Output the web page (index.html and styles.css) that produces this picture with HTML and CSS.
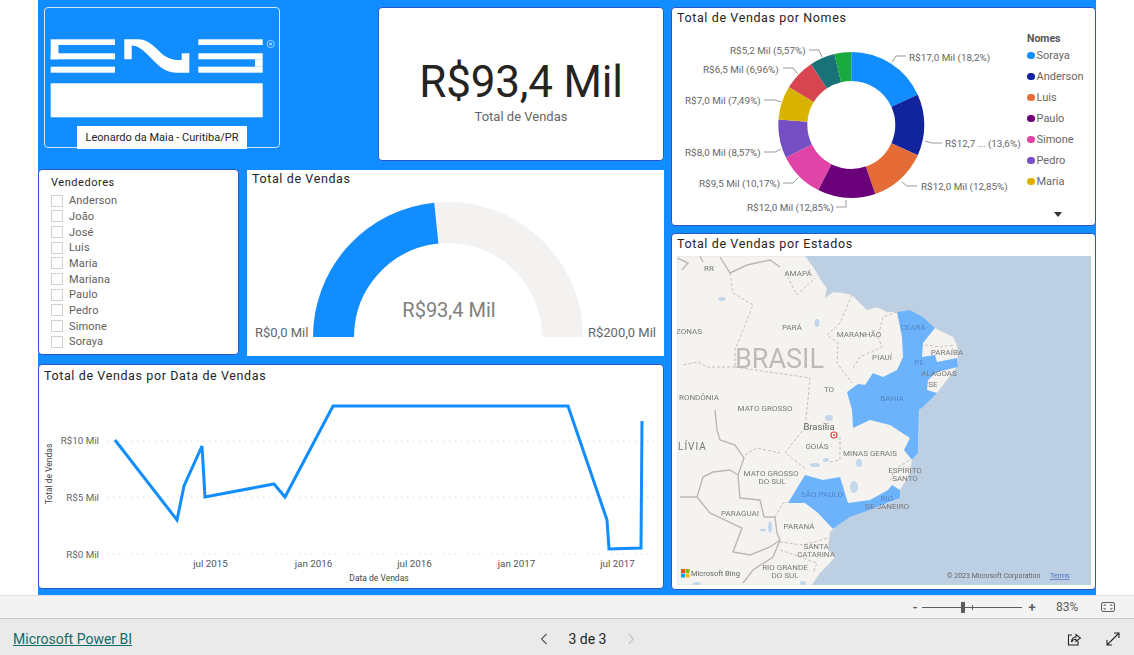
FILE: index.html
```html
<!DOCTYPE html>
<html lang="pt-BR">
<head>
<meta charset="utf-8">
<title>Total de Vendas</title>
<link rel="stylesheet" href="styles.css">
</head>
<body>
<div class="page">
  <main class="canvas">
    <div class="col-left">
      <div class="row-top">
        <section class="logo-card">
          <svg class="logo" viewBox="44 7 236 141" aria-label="SNS">
            <g fill="#fff">
              <rect x="50.7" y="39.3" width="64.3" height="5.7"/>
              <rect x="50.7" y="45" width="7.7" height="14.3"/>
              <rect x="50.7" y="53.3" width="64.3" height="6"/>
              <rect x="50.7" y="66.7" width="64.3" height="6"/>
              <path d="M124.300 39.300H138C148 39.300 155 47 162 54 170 60 175 60 181.700 60V53.300H189.300V72.700H176C164 72.700 158 65 150 57 143 50 138 45.500 131.700 45.500V59.300H124.300Z"/>
              <rect x="198.300" y="39.3" width="64.400" height="5.7"/>
              <rect x="198.300" y="53.3" width="64.400" height="6"/>
              <rect x="255" y="59.300" width="7.700" height="7.400"/>
              <rect x="198.300" y="66.7" width="64.400" height="6"/>
              <rect x="50.7" y="83.300" width="212" height="34"/>
            </g>
            <circle cx="270.700" cy="44" r="3.600" fill="none" stroke="#9fd0ff" stroke-width="1"/>
            <circle cx="270.700" cy="44" r="1.500" fill="#9fd0ff"/>
          </svg>
          <div class="logo-caption">Leonardo da Maia - Curitiba/PR</div>
        </section>
        <section class="card kpi-card">
          <div class="kpi-value">R$93,4 Mil</div>
          <div class="kpi-label">Total de Vendas</div>
        </section>
      </div>
      <div class="row-mid">
        <section class="card slicer-card">
          <h2 class="slicer-title">Vendedores</h2>
          <ul class="slicer-list">
            <li class="slicer-item"><span class="check"></span>Anderson</li>
            <li class="slicer-item"><span class="check"></span>João</li>
            <li class="slicer-item"><span class="check"></span>José</li>
            <li class="slicer-item"><span class="check"></span>Luis</li>
            <li class="slicer-item"><span class="check"></span>Maria</li>
            <li class="slicer-item"><span class="check"></span>Mariana</li>
            <li class="slicer-item"><span class="check"></span>Paulo</li>
            <li class="slicer-item"><span class="check"></span>Pedro</li>
            <li class="slicer-item"><span class="check"></span>Simone</li>
            <li class="slicer-item"><span class="check"></span>Soraya</li>
          </ul>
        </section>
        <section class="gauge-card">
          <h2 class="title gauge-title">Total de Vendas</h2>
          <svg class="gauge" viewBox="247 188 417 168">
            <path d="M333.500 337A114.500 114.500 0 0 1 562.500 337" class="gauge-bg" pathLength="100"/>
            <path d="M333.500 337A114.500 114.500 0 0 1 562.500 337" class="gauge-fg" pathLength="100" stroke-dasharray="46.7 100"/>
            <text x="449" y="317" text-anchor="middle" class="gauge-value">R$93,4 Mil</text>
            <text x="255" y="337" class="gauge-end">R$0,0 Mil</text>
            <text x="588" y="337" class="gauge-end">R$200,0 Mil</text>
          </svg>
        </section>
      </div>
      <section class="card line-card">
        <h2 class="title line-title">Total de Vendas por Data de Vendas</h2>
        <svg class="line-chart" viewBox="39 386 624 203">
          <g class="grid">
            <line x1="107" x2="658" y1="441" y2="441"/>
            <line x1="107" x2="658" y1="497" y2="497"/>
            <line x1="107" x2="658" y1="554" y2="554"/>
          </g>
          <g class="y-labels" text-anchor="end">
            <text x="99" y="444">R$10 Mil</text>
            <text x="99" y="501">R$5 Mil</text>
            <text x="99" y="558">R$0 Mil</text>
          </g>
          <g class="x-labels" text-anchor="middle">
            <text x="210.500" y="567">jul 2015</text>
            <text x="313.500" y="567">jan 2016</text>
            <text x="414.500" y="567">jul 2016</text>
            <text x="516.500" y="567">jan 2017</text>
            <text x="617.500" y="567">jul 2017</text>
          </g>
          <text class="axis-title" x="379" y="581" text-anchor="middle">Data de Vendas</text>
          <text class="axis-title" transform="translate(52 474) rotate(-90)" text-anchor="middle">Total de Vendas</text>
          <polyline class="series" points="115,440 177,520 184,486 202,446 205,497 274,484 285,497 333,406 568,406 607,520 609,549 641,548 642,421"/>
        </svg>
      </section>
    </div>
    <div class="col-right">
      <section class="card donut-card">
        <h2 class="title donut-title">Total de Vendas por Nomes</h2>
        <div class="donut-body">
          <svg class="donut" viewBox="671 28 350 198">
            <g transform="rotate(-90 851.300 125)" fill="none" stroke-width="29">
              <circle cx="851.300" cy="125" r="58.500" pathLength="100" stroke="#118DFF" stroke-dasharray="18.2 81.8" stroke-dashoffset="0"/>
              <circle cx="851.300" cy="125" r="58.500" pathLength="100" stroke="#12239E" stroke-dasharray="13.6 86.4" stroke-dashoffset="-18.2"/>
              <circle cx="851.300" cy="125" r="58.500" pathLength="100" stroke="#E66C37" stroke-dasharray="12.85 87.15" stroke-dashoffset="-31.8"/>
              <circle cx="851.300" cy="125" r="58.500" pathLength="100" stroke="#6B007B" stroke-dasharray="12.85 87.15" stroke-dashoffset="-44.65"/>
              <circle cx="851.300" cy="125" r="58.500" pathLength="100" stroke="#E044A7" stroke-dasharray="10.17 89.83" stroke-dashoffset="-57.5"/>
              <circle cx="851.300" cy="125" r="58.500" pathLength="100" stroke="#744EC2" stroke-dasharray="8.57 91.43" stroke-dashoffset="-67.67"/>
              <circle cx="851.300" cy="125" r="58.500" pathLength="100" stroke="#D9B300" stroke-dasharray="7.49 92.51" stroke-dashoffset="-76.24"/>
              <circle cx="851.300" cy="125" r="58.500" pathLength="100" stroke="#D64550" stroke-dasharray="6.96 93.04" stroke-dashoffset="-83.73"/>
              <circle cx="851.300" cy="125" r="58.500" pathLength="100" stroke="#197278" stroke-dasharray="5.57 94.43" stroke-dashoffset="-90.69"/>
            </g>
            <path d="M837.680 68.100A58.500 58.500 0 0 1 851.300 66.500" fill="none" stroke="#1AAB40" stroke-width="29"/>
            <g class="leaders">
              <polyline points="892,62 896,56 906,56"/>
              <polyline points="925,141 932,143 942,143"/>
              <polyline points="902,182 907,186 917,186"/>
              <polyline points="846,200 846,207 836,207"/>
              <polyline points="798,178 793,183 783,183"/>
              <polyline points="781,149 775,152 764,152"/>
              <polyline points="781,102 775,100 764,100"/>
              <polyline points="798,74 793,68 783,68"/>
              <polyline points="822,57 819,50 809,50"/>
            </g>
            <g class="donut-labels">
              <text x="909" y="61">R$17,0 Mil (18,2%)</text>
              <text x="945" y="147">R$12,7 ... (13,6%)</text>
              <text x="921" y="190">R$12,0 Mil (12,85%)</text>
              <text x="747" y="211">R$12,0 Mil (12,85%)</text>
              <text x="699" y="187">R$9,5 Mil (10,17%)</text>
              <text x="685" y="156">R$8,0 Mil (8,57%)</text>
              <text x="685" y="104">R$7,0 Mil (7,49%)</text>
              <text x="703" y="73">R$6,5 Mil (6,96%)</text>
              <text x="730" y="54">R$5,2 Mil (5,57%)</text>
            </g>
          </svg>
          <div class="legend">
            <div class="legend-title">Nomes</div>
            <div class="legend-item"><span class="dot dot-soraya"></span>Soraya</div>
            <div class="legend-item"><span class="dot dot-anderson"></span>Anderson</div>
            <div class="legend-item"><span class="dot dot-luis"></span>Luis</div>
            <div class="legend-item"><span class="dot dot-paulo"></span>Paulo</div>
            <div class="legend-item"><span class="dot dot-simone"></span>Simone</div>
            <div class="legend-item"><span class="dot dot-pedro"></span>Pedro</div>
            <div class="legend-item"><span class="dot dot-maria"></span>Maria</div>
            <div class="legend-more"></div>
          </div>
        </div>
      </section>
      <section class="card map-card">
        <h2 class="title map-title">Total de Vendas por Estados</h2>
        <svg class="map" viewBox="677 256 414 329">
          <rect x="677" y="256" width="414" height="329" fill="#bdcfe3"/>
          <path class="land" d="M677 256H805L811 264 817 273 822 282 827 288 825 298 833 292 843 293 852 295 860 303 867 310 877 307 887 312 897 312 910 310 923 317 935 328 945 333 953 337 957 345 958 353 957 367 947 380 937 393 928 402 923 407 919 410 919 430 918 453 912 460 910 472 905 482 900 490 900 498 885 505 870 510 850 517 840 524 830 532 828 550 835 557 828 565 820 573 812 585H677Z"/>
          <g class="water">
            <ellipse cx="722" cy="299" rx="3.500" ry="2"/>
            <ellipse cx="817" cy="323" rx="2.500" ry="4"/>
            <ellipse cx="829" cy="418" rx="4" ry="3"/>
            <ellipse cx="859" cy="463" rx="3" ry="4"/>
            <ellipse cx="815" cy="465" rx="5" ry="2"/>
            <ellipse cx="826" cy="460" rx="3" ry="2"/>
            <ellipse cx="854" cy="487" rx="4" ry="6"/>
            <ellipse cx="770" cy="527" rx="2" ry="6"/>
            <ellipse cx="763" cy="530" rx="3" ry="1.500"/>
            <ellipse cx="803" cy="583" rx="3" ry="2"/>
            <ellipse cx="697" cy="584" rx="4" ry="2"/>
          </g>
          <path class="state" d="M897 312 910 310 923 317 935 328 923 343 922 357 935 355 937 362 957 358 958 367 937 372 928 380 927 390 937 393 923 407 919 410 918 453 912 460 904 450 910 438 890 425 870 420 853 428 852 410 847 392 858 384 865 385 873 373 883 377 897 370 903 357 902 337Z"/>
          <path class="state" d="M788 503 805 475 823 480 840 477 848 503 870 500 888 490 892 485 900 490 900 498 870 510 850 517 833 529 818 513 805 503Z"/>
          <g class="borders-state">
            <path d="M785 272 797 295 815 278"/>
            <path d="M730 273 733 293 753 305 735 350 735 367"/>
            <path d="M852 295 840 323 827 335 838 343 837 363 852 383"/>
            <path d="M897 312 883 317 878 337 882 347 860 357 852 370"/>
            <path d="M735 367 707 367 698 362 683 365"/>
            <path d="M735 367 810 378 807 410 805 427 785 453 807 470"/>
            <path d="M745 455 757 448 780 453"/>
            <path d="M840 437 840 460 830 462"/>
            <path d="M775 517 783 503 788 502"/>
            <path d="M780 542 803 545 828 538"/>
            <path d="M780 550 803 558 817 563 813 573"/>
            <path d="M898 467 910 460M893 473 890 482"/>
            <path d="M925 345 940 347 955 345"/>
          </g>
          <g class="borders-nation">
            <path d="M677 258 688 263 682 270M700 256 703 262"/>
            <path d="M720 257 730 273 747 265 770 260 780 267"/>
            <path d="M715 410 717 430 720 440 735 445 744 458 738 475 740 498 760 500 764 517"/>
            <path d="M697 497 703 477 713 472 730 470 738 475"/>
            <path d="M680 497 697 497 710 513 742 528 733 552 750 555 770 547 780 540 777 533 775 517 764 517"/>
            <path d="M780 540 773 557 753 570 743 583"/>
          </g>
          <text class="map-big" x="735" y="368">BRASIL</text>
          <g class="map-labels" text-anchor="middle">
            <text x="709" y="271">RR</text>
            <text x="798" y="276">AMAPÁ</text>
            <text x="689" y="334">ZONAS</text>
            <text x="792" y="330">PARÁ</text>
            <text x="859" y="337">MARANHÃO</text>
            <text x="882" y="360">PIAUÍ</text>
            <text x="913" y="330" class="on-state">CEARÁ</text>
            <text x="947" y="355">PARAÍBA</text>
            <text x="919" y="365" class="on-state">PE</text>
            <text x="939" y="376">ALAGOAS</text>
            <text x="933" y="387">SE</text>
            <text x="892" y="401" class="on-state">BAHIA</text>
            <text x="829" y="392">TO</text>
            <text x="699" y="400">RONDÔNIA</text>
            <text x="765" y="411">MATO GROSSO</text>
            <text class="map-city" x="819" y="430">Brasília</text>
            <text x="817" y="449">GOIÁS</text>
            <text x="870" y="456">MINAS GERAIS</text>
            <text x="905" y="473">ESPÍRITO</text>
            <text x="905" y="481">SANTO</text>
            <text x="771" y="476">MATO GROSSO</text>
            <text x="772" y="484">DO SUL</text>
            <text x="740" y="516">PARAGUAI</text>
            <text x="799" y="529">PARANÁ</text>
            <text x="822" y="497" class="on-state">SÃO PAULO</text>
            <text x="887" y="501" class="on-state">RIO</text>
            <text x="887" y="509">DE JANEIRO</text>
            <text x="816" y="549">SANTA</text>
            <text x="816" y="557">CATARINA</text>
            <text x="785" y="570">RIO GRANDE</text>
            <text x="785" y="578">DO SUL</text>
          </g>
          <text class="map-country" x="678" y="450">LÍVIA</text>
          <circle cx="834" cy="435" r="3" fill="#fff" stroke="#d9413a" stroke-width="1.200"/>
          <circle cx="834" cy="435" r="1.100" fill="#d9413a"/>
          <g>
            <rect x="681" y="569" width="4" height="4" fill="#f25022"/>
            <rect x="685.500" y="569" width="4" height="4" fill="#7fba00"/>
            <rect x="681" y="573.500" width="4" height="4" fill="#00a4ef"/>
            <rect x="685.500" y="573.500" width="4" height="4" fill="#ffb900"/>
          </g>
          <text class="map-bing" x="691" y="576">Microsoft Bing</text>
          <text class="map-copy" x="947" y="578">© 2023 Microsoft Corporation</text>
          <text class="map-terms" x="1050" y="578">Terms</text>
        </svg>
      </section>
    </div>
  </main>
  <div class="zoom-bar">
    <span class="zoom-sign">-</span>
    <span class="zoom-track"><span class="zoom-tick"></span><span class="zoom-thumb"></span></span>
    <span class="zoom-sign">+</span>
    <span class="zoom-pct">83%</span>
    <svg class="fit-icon" viewBox="0 0 14 10"><rect x="0.500" y="0.500" width="13" height="9" rx="1.500"/><path d="M3 4V3H5M9 3H11V4M3 6V7H5M9 7H11V6"/></svg>
  </div>
  <footer class="footer">
    <a class="brand" href="#">Microsoft Power BI</a>
    <nav class="pager">
      <svg class="chev" viewBox="0 0 8 12"><path d="M6.500 1 1.500 6 6.500 11"/></svg>
      <span class="pager-text">3 de 3</span>
      <svg class="chev chev-off" viewBox="0 0 8 12"><path d="M1.500 1 6.500 6 1.500 11"/></svg>
    </nav>
    <div class="actions">
      <svg class="act" viewBox="0 0 14 14"><path d="M5 3H1.500V13H11V9"/><path d="M4.500 10C4.500 6.500 7 5 9 5V2.500L13.500 6 9 9.500V7.200C7 7.200 5.500 8 4.500 10Z"/></svg>
      <svg class="act" viewBox="0 0 14 14"><path d="M1 13 13 1M8 1H13V6M1 8V13H6"/></svg>
    </div>
  </footer>
</div>
</body>
</html>
```
FILE: styles.css
```css
* { box-sizing: border-box; }
html, body { margin: 0; padding: 0; }
body { background: #fff; font-family: Roboto, "Noto Sans", sans-serif; color: #252423; overflow: hidden; }
.page { width: 1134px; height: 655px; display: flex; flex-direction: column; }

.canvas { width: 1058px; height: 595px; margin-left: 38px; padding: 7px 0 0 0; background: #118dff; display: flex; gap: 7px; flex: none; }
.col-left { width: 626px; display: flex; flex-direction: column; }
.col-right { width: 425px; display: flex; flex-direction: column; gap: 7px; }
.row-top { height: 154px; display: flex; justify-content: space-between; margin-left: 6px; }
.row-mid { margin-top: 8px; height: 187px; display: flex; justify-content: space-between; }

.card { background: #fff; border: 1px solid #2a55c9; border-radius: 4px; }
.title { margin: 0; font-size: 12.500px; font-weight: 400; letter-spacing: .62px; color: #252423; line-height: 16px; }

.logo-card { position: relative; width: 236px; height: 141px; border: 1px solid #cfe6ff; border-radius: 4px; }
.logo { position: absolute; left: -1px; top: -1px; width: 236px; height: 141px; display: block; }
.logo-caption { position: absolute; left: 32px; top: 118px; width: 170px; height: 23px; background: #fff; text-align: center; font-size: 11px; line-height: 24px; color: #252423; }

.kpi-card { width: 286px; display: flex; flex-direction: column; align-items: center; padding-top: 47px; }
.kpi-value { font-size: 44px; line-height: 54px; color: #252423; letter-spacing: -.2px; }
.kpi-label { font-size: 13px; line-height: 16px; color: #666; margin-top: 0; }

.slicer-card { width: 201px; height: 186px; padding: 6px 0 0 12px; }
.slicer-title { margin: 0 0 3px; font-size: 11px; font-weight: 400; line-height: 14px; letter-spacing: .55px; color: #252423; }
.slicer-list { list-style: none; margin: 0; padding: 0; }
.slicer-item { height: 15.670px; display: flex; align-items: center; gap: 6px; font-size: 11px; color: #605e5c; letter-spacing: .15px; }
.check { width: 12px; height: 12px; border: 1px solid #d2d0ce; background: #fff; flex: none; }

.gauge-card { width: 417px; height: 186px; margin-top: 1px; background: #fff; }
.gauge-title { padding: 1px 0 0 5px; height: 18px; }
.gauge { display: block; width: 417px; height: 168px; }
.gauge-bg, .gauge-fg { fill: none; stroke-width: 41; }
.gauge-bg { stroke: #f3f2f1; }
.gauge-fg { stroke: #118dff; }
.gauge-value { font-size: 20px; fill: #808080; }
.gauge-end { font-size: 13px; fill: #666; }

.line-card { margin-top: 8px; height: 225px; }
.line-title { padding: 3px 0 0 5px; height: 21px; }
.line-chart { display: block; width: 624px; height: 203px; }
.grid line { stroke: #d6d6d6; stroke-width: 1; stroke-dasharray: 1 5; }
.y-labels text { font-size: 9.800px; fill: #666; }
.x-labels text { font-size: 9.800px; fill: #555; }
.axis-title { font-size: 8.500px; fill: #444; }
.series { fill: none; stroke: #118dff; stroke-width: 3; stroke-linejoin: miter; }

.donut-card { height: 219px; }
.donut-title { padding: 2px 0 0 5px; height: 20px; }
.donut-body { display: flex; height: 197px; }
.donut { display: block; width: 350px; height: 198px; flex: none; margin-left: -1px; }
.leaders polyline { fill: none; stroke: #999; stroke-width: 1; }
.donut-labels text { font-size: 9.900px; fill: #666; }
.legend { position: relative; flex: 1; padding: 4px 0 0 6px; }
.legend-title { font-size: 10.500px; font-weight: 700; color: #555; line-height: 14px; margin-bottom: 3px; }
.legend-item { height: 21px; display: flex; align-items: flex-start; gap: 2px; font-size: 11px; line-height: 13px; color: #666; }
.dot { width: 7.500px; height: 7.500px; border-radius: 50%; margin-top: 2.500px; flex: none; }
.dot-soraya { background: #118dff; }
.dot-anderson { background: #12239e; }
.dot-luis { background: #e66c37; }
.dot-paulo { background: #6b007b; }
.dot-simone { background: #e044a7; }
.dot-pedro { background: #744ec2; }
.dot-maria { background: #d9b300; }
.legend-more { position: absolute; left: 33px; top: 184px; width: 0; height: 0; border: 4px solid transparent; border-top: 5px solid #333; border-bottom: 0; }

.map-card { height: 357px; }
.map-title { padding: 2px 0 0 5px; height: 22px; }
.map { display: block; width: 414px; height: 329px; margin-left: 5px; filter: blur(.3px); }
.land { fill: #f5f3f0; stroke: #d9d6d2; stroke-width: .5; }
.water { fill: #c4d6ea; }
.state { fill: #6db3fb; }
.borders-state path { fill: none; stroke: #bdb9b5; stroke-width: .9; stroke-dasharray: 3 2; }
.borders-nation path { fill: none; stroke: #bcb8b4; stroke-width: 1.400; }
.map-big { font-size: 27px; fill: #bdbbb9; }
.map-labels text { font-size: 8px; fill: #7a7a7a; }
.map-labels .on-state { fill: #4f86c6; }
.map-labels .map-city { font-size: 9.500px; fill: #666; }
.map-country { font-size: 10px; fill: #777; letter-spacing: 1px; }
.map-bing { font-size: 7.500px; fill: #666; }
.map-copy { font-size: 7px; fill: #666; }
.map-terms { font-size: 7px; fill: #4b6cc0; text-decoration: underline; }

.zoom-bar { height: 23px; flex: none; background: #f3f3f3; border-top: 1px solid #e1e1e1; display: flex; align-items: center; justify-content: flex-end; padding-right: 19px; font-size: 12px; color: #605e5c; }
.zoom-sign { width: 12px; text-align: center; font-size: 13px; font-weight: 700; color: #605e5c; }
.zoom-track { position: relative; width: 100px; height: 1px; margin: 0 4px 0 1px; background: #605e5c; }
.zoom-thumb { position: absolute; left: 39px; top: -5px; width: 4px; height: 11px; background: #605e5c; }
.zoom-tick { position: absolute; left: 50px; top: -2px; width: 1px; height: 5px; background: #605e5c; }
.zoom-pct { margin-left: 18px; width: 23px; }
.fit-icon { width: 14px; height: 10px; margin-left: 22px; fill: none; stroke: #605e5c; stroke-width: 1; }

.footer { height: 37px; flex: none; background: #eaeaea; border-top: 1px solid #c8c8c8; display: grid; grid-template-columns: 1fr auto 1fr; align-items: center; padding: 3px 14px 0 13px; }
.brand { font-size: 14px; color: #0f6b6b; text-decoration: underline; justify-self: start; }
.pager { display: flex; align-items: center; gap: 20px; margin-left: 42px; }
.pager-text { font-size: 14px; font-weight: 400; color: #252423; }
.chev { width: 8px; height: 12px; fill: none; stroke: #605e5c; stroke-width: 1.200; }
.chev-off { stroke: #c4c4c4; }
.actions { justify-self: end; display: flex; gap: 25px; }
.act { width: 14px; height: 14px; fill: none; stroke: #252423; stroke-width: 1.100; }
```
